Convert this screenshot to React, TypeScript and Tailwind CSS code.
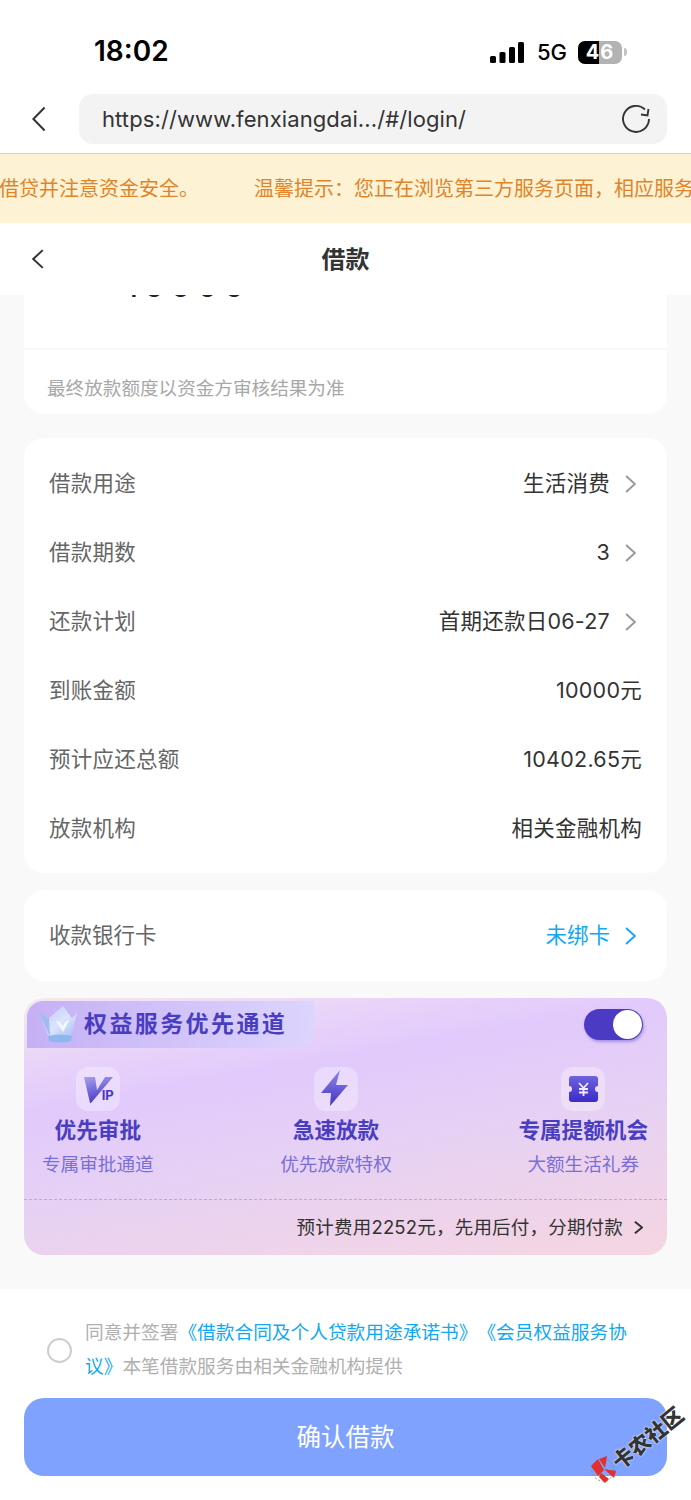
const ROWS = [
  { label: "借款用途", value: "生活消费", arrow: true },
  { label: "借款期数", value: "3", arrow: true },
  { label: "还款计划", value: "首期还款日06-27", arrow: true },
  { label: "到账金额", value: "10000元" },
  { label: "预计应还总额", value: "10402.65元" },
  { label: "放款机构", value: "相关金融机构" },
]

function Chevron({ left, className }: { left?: boolean; className: string }) {
  return (
    <svg viewBox="0 0 10 18" preserveAspectRatio="none" fill="none" stroke="currentColor" strokeWidth="1.4" className={className}>
      <path d={left ? "M9 1 L1 9 L9 17" : "M1 1 L9 9 L1 17"} vectorEffect="non-scaling-stroke" strokeWidth="2" />
    </svg>
  )
}

function Crown() {
  return (
    <svg viewBox="0 0 38 37" className="h-[37px] w-[38px] shrink-0">
      <defs>
        <linearGradient id="crown" x1="0" y1="0" x2="1" y2="1">
          <stop offset="0" stopColor="#b9cbf6" />
          <stop offset="0.55" stopColor="#dbe3fd" />
          <stop offset="1" stopColor="#a2bdf3" />
        </linearGradient>
      </defs>
      <path d="M0 7 L10 12 L17 6 L24 0 L29 7 L33 12 L38 7 L32 31 L10 31 Z" fill="url(#crown)" />
      <path d="M0 7 L10 12 L11 31 Z" fill="#a3bbf2" />
      <path d="M17 15 L24 26 L31 13 L26 16 L24 20 L21 16 Z" fill="#f4f7ff" />
      <path d="M9 30 Q21 27 33 30 L32 35 Q21 38 10 35 Z" fill="#8db8ef" />
    </svg>
  )
}

function VipIcon() {
  return (
    <div className="relative h-11 w-11">
      <svg viewBox="0 0 44 44" className="h-11 w-11">
        <defs>
          <linearGradient id="vip" x1="0.2" y1="0" x2="0.5" y2="1">
            <stop offset="0" stopColor="#a49be8" />
            <stop offset="1" stopColor="#4436c6" />
          </linearGradient>
        </defs>
        <path d="M8 10 L19 10 L21 23 L29 10 L37 10 L15 36 L14 36 Z" fill="url(#vip)" />
      </svg>
      <span className="absolute bottom-[9px] right-[6px] text-[13px] font-bold leading-none text-[#4436c6]">IP</span>
    </div>
  )
}

function BoltIcon() {
  return (
    <svg viewBox="0 0 44 44" className="h-11 w-11">
      <defs>
        <linearGradient id="bolt" x1="0.5" y1="0" x2="0.5" y2="1">
          <stop offset="0" stopColor="#8f88e6" />
          <stop offset="1" stopColor="#4233c6" />
        </linearGradient>
      </defs>
      <path d="M26 3 L7 26 L17 26 L16 39 L34 18 L22 18 Z" fill="url(#bolt)" />
    </svg>
  )
}

function TicketIcon() {
  return (
    <svg viewBox="0 0 44 44" className="h-11 w-11">
      <defs>
        <linearGradient id="ticket" x1="0" y1="0" x2="0" y2="1">
          <stop offset="0" stopColor="#6f63dd" />
          <stop offset="1" stopColor="#3a2bc6" />
        </linearGradient>
      </defs>
      <path
        d="M11 9 H34 A3 3 0 0 1 37 12 V19 A3 3 0 0 0 37 25 V32 A3 3 0 0 1 34 35 H11 A3 3 0 0 1 8 32 V25 A3 3 0 0 0 8 19 V12 A3 3 0 0 1 11 9 Z"
        fill="url(#ticket)"
      />
      <path d="M18 16 L22.5 21 L27 16 M22.5 21 V29 M18 22 H27 M18 25.5 H27" stroke="#efeafd" strokeWidth="1.8" fill="none" />
    </svg>
  )
}

const PERKS = [
  { icon: VipIcon, title: "优先审批", desc: "专属审批通道" },
  { icon: BoltIcon, title: "急速放款", desc: "优先放款特权" },
  { icon: TicketIcon, title: "专属提额机会", desc: "大额生活礼券" },
]

export default function App() {
  return (
    <div className="relative flex h-[1500px] w-[691px] flex-col overflow-hidden bg-white font-[Inter,'Noto_Sans_CJK_SC',sans-serif] text-[#333] [text-spacing-trim:space-all]">
      {/* status bar */}
      <div className="flex h-[94px] shrink-0 items-start justify-between pl-[94px] pr-[64px] pt-[31px]">
        <span className="text-[28px] font-semibold leading-10 text-black">18:02</span>
        <div className="flex items-center pt-[9px]">
          <svg viewBox="0 0 34 21" className="h-[21px] w-[34px]">
            <rect x="0" y="14" width="6" height="7" rx="1.5" />
            <rect x="9.5" y="10" width="6" height="11" rx="1.5" />
            <rect x="19" y="5" width="6" height="16" rx="1.5" />
            <rect x="28" y="0" width="6" height="21" rx="1.5" />
          </svg>
          <span className="ml-[13px] text-[22px] font-medium leading-6 text-black">5G</span>
          <div className="ml-[11px] flex items-center">
            <div className="relative flex h-[23px] w-[44px] items-center justify-center overflow-hidden rounded-[7px] bg-[#b3b3b3]">
              <div className="absolute inset-y-0 left-0 w-[21px] bg-black" />
              <span className="relative text-[20px] font-bold leading-none tracking-[1px] text-white">46</span>
            </div>
            <div className="ml-[2px] h-2 w-[3px] rounded-r-sm bg-[#c4c4c4]" />
          </div>
        </div>
      </div>

      {/* browser bar */}
      <div className="flex h-[60px] shrink-0 items-start border-b border-[#cfcfcf] pr-[24px]">
        <div className="flex h-[50px] w-[79px] shrink-0 items-center pl-[32px]">
          <Chevron left className="h-[26px] w-[14px] text-[#333]" />
        </div>
        <div className="flex h-[50px] flex-1 items-center justify-between rounded-[14px] bg-[#f3f3f3] pl-[23px] pr-[16px]">
          <span className="text-[22px] leading-none tracking-[0.1px] text-[#333]">https://www.fenxiangdai.../#/login/</span>
          <svg viewBox="0 0 30 30" className="h-[30px] w-[30px]" fill="none" stroke="#333" strokeWidth="1.9">
            <path d="M24 5.5 A13 13 0 1 0 28 15" />
            <path d="M27.5 5 L26.5 11.5 L20 10.5" />
          </svg>
        </div>
      </div>

      {/* marquee notice */}
      <div className="flex h-[69px] shrink-0 items-center overflow-hidden whitespace-nowrap bg-[#fef2d4] text-[20px] text-[#df8428]">
        <span className="-ml-[1px] w-[255px] shrink-0">借贷并注意资金安全。</span>
        <span className="shrink-0">{"温馨提示\uFF1A您正在浏览第三方服务页面\uFF0C相应服务由第三方提供"}</span>
      </div>

      {/* nav */}
      <div className="relative z-10 flex h-[72px] shrink-0 items-center justify-center bg-white">
        <Chevron left className="absolute left-[32px] top-[26px] h-[20px] w-[12px] text-[#333]" />
        <span className="mt-[1px] text-[24px] font-bold leading-none text-[#333]">借款</span>
      </div>

      {/* content */}
      <div className="flex flex-1 flex-col overflow-hidden bg-[#f9f9f9] px-[24px]">
        <div className="h-[119px] shrink-0 overflow-hidden rounded-b-[20px] bg-white">
          <div className="h-[55px] overflow-hidden border-b-2 border-[#f8f8f8]">
            <div className="-mt-[29px] pl-[100px] text-[36px] leading-[36px] tracking-[4px] text-[#222]">10000</div>
          </div>
          <div className="pl-[23px] pt-[26px] text-[18.6px] leading-6 text-[#a8a8a8]">最终放款额度以资金方审核结果为准</div>
        </div>

        <div className="mt-[24px] shrink-0 rounded-[20px] bg-white px-[25px] pb-[10px] pt-[11px]">
          {ROWS.map((row) => (
            <div key={row.label} className="flex h-[69px] items-center justify-between text-[21.5px] tracking-[0.25px]">
              <span className="text-[#666]">{row.label}</span>
              <div className="flex items-center">
                <span className="text-[#333]">{row.value}</span>
                {row.arrow && <Chevron className="ml-[15px] mr-[6px] h-[18px] w-[11px] text-[#999]" />}
              </div>
            </div>
          ))}
        </div>

        <div className="mt-[17px] flex h-[91px] shrink-0 items-center justify-between rounded-[20px] bg-white px-[25px] text-[21.5px]">
          <span className="text-[#666]">收款银行卡</span>
          <div className="flex items-center text-[#12a8f5]">
            <span>未绑卡</span>
            <Chevron className="ml-[15px] mr-[6px] h-[18px] w-[11px]" />
          </div>
        </div>

        {/* perks card */}
        <div className="mt-[17px] flex h-[257px] shrink-0 flex-col overflow-hidden rounded-[20px] bg-[linear-gradient(170deg,#f6e9ee_0%,#e9d4f9_18%,#e1cafc_32%,#e8d2f2_62%,#f5d5e1_100%)]">
          <div className="flex items-start justify-between pl-[3px] pr-[24px] pt-[3px]">
            <div className="flex h-[47px] w-[287px] items-center gap-[7px] rounded-br-[16px] rounded-tl-[16px] bg-[linear-gradient(90deg,#c5b0f5,#dcd5fd)] pl-[12px]">
              <Crown />
              <span className="text-[23px] font-bold tracking-[2.4px] text-[#4a3ec0]">权益服务优先通道</span>
            </div>
            <div className="relative mt-[8px] h-[31px] w-[59px] rounded-full bg-[#4a3ac4] shadow-[1px_2px_3px_rgba(74,58,196,0.4)]">
              <div className="absolute right-[1px] top-[1px] h-[29px] w-[29px] rounded-full bg-white" />
            </div>
          </div>

          <div className="mt-[19px] flex justify-between pl-[18px] pr-[19px]">
            {PERKS.map(({ icon: Icon, title, desc }) => (
              <div key={title} className="flex flex-col items-center">
                <div className="flex h-[44px] w-[44px] items-center justify-center rounded-[12px] bg-white/30">
                  <Icon />
                </div>
                <span className="mt-[4px] text-[21.6px] font-bold leading-[30px] text-[#4a3ec0]">{title}</span>
                <span className="mt-[6px] text-[18.6px] leading-[26px] text-[#7a6fd6]">{desc}</span>
              </div>
            ))}
          </div>

          <div className="mt-auto flex h-[56px] items-center justify-end border-t border-dashed border-[#bfa6ec] pr-[24px] text-[18.5px] tracking-[0.2px] text-[#333]">
            <span>{"预计费用2252元\uFF0C先用后付\uFF0C分期付款"}</span>
            <Chevron className="ml-[11px] h-[13px] w-[9px]" />
          </div>
        </div>
      </div>

      {/* agreement + submit */}
      <div className="flex h-[211px] shrink-0 flex-col bg-white px-[24px] pt-[27px]">
        <div className="flex items-center">
          <div className="ml-[23px] h-[25px] w-[25px] shrink-0 rounded-full border-2 border-[#cdcdcd]" />
          <p className="ml-[13px] w-[550px] text-[18.7px] leading-[34px] text-[#b0b0b0]">
            同意并签署<span className="text-[#12a8f5]">《借款合同及个人贷款用途承诺书》《会员权益服务协议》</span>本笔借款服务由相关金融机构提供
          </p>
        </div>
        <button className="mt-[14px] flex h-[78px] w-full items-center justify-center rounded-[20px] bg-[#7fa2ff] text-[24.5px] text-white">
          确认借款
        </button>
      </div>

      {/* forum watermark */}
      <div className="absolute left-[590px] top-[1404px] h-[80px] w-[96px]">
        <svg viewBox="0 0 28 28" className="absolute bottom-0 left-0 h-[28px] w-[28px]">
          <circle cx="13" cy="14" r="11" fill="none" stroke="#888" strokeWidth="1" strokeDasharray="2 2" />
          <path d="M1 10 L8 3 L14 14 L8 20 Z M9 3 L17 0 L15 12 Z M14 13 L26 15 L24 22 Z M11 17 L19 23 L15 27 L9 21 Z" fill="#e2302a" />
        </svg>
        <span className="absolute left-[16px] top-[24px] w-[84px] rotate-[-39deg] whitespace-nowrap text-center text-[21px] font-black leading-[21px] text-[#333] [text-shadow:0_0_2px_#fff,0_0_1px_#fff]">
          卡农社区
        </span>
      </div>
    </div>
  )
}
